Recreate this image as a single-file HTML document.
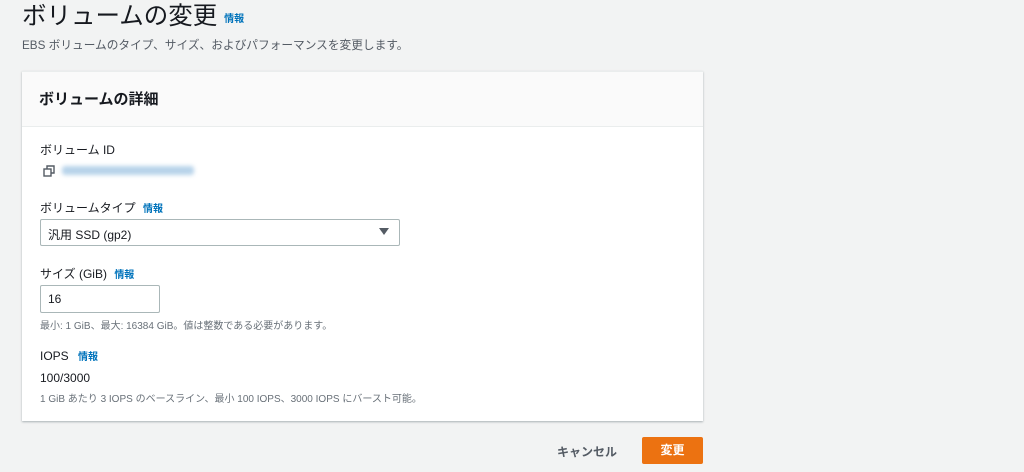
<!DOCTYPE html><html><head><meta charset="utf-8"><style>
*{margin:0;padding:0;box-sizing:border-box}
body{width:1024px;height:472px;background:#f2f3f3;font-family:"Liberation Sans","Noto Sans CJK JP",sans-serif;color:#16191f;position:relative;overflow:hidden}
.a{position:absolute;white-space:nowrap}
.info{color:#0073bb;font-weight:bold;font-size:10px}
.lbl{font-size:12px;color:#16191f}
.hint{font-size:10px;color:#687078}
</style></head><body>
<div class="a" style="left:22px;top:-3px;font-size:24.5px;color:#16191f">ボリュームの変更 <span class="info" style="font-size:10px;vertical-align:middle">情報</span></div>
<div class="a" style="left:22px;top:36px;font-size:11.7px;color:#545b64">EBS ボリュームのタイプ、サイズ、およびパフォーマンスを変更します。</div>
<div class="a" style="left:22px;top:71px;width:681px;height:350px;background:#fff;box-shadow:0 1px 2px rgba(0,28,36,.3);border-top:1px solid #eaeded">
<div style="height:55px;background:#fafafa;border-bottom:1px solid #eaeded;position:relative"><div class="a" style="left:17px;top:16px;font-size:15px;font-weight:bold">ボリュームの詳細</div></div>
</div>
<div class="a lbl" style="left:40px;top:141px">ボリューム ID</div>
<svg class="a" style="left:43px;top:165px" width="12" height="12" viewBox="0 0 12 12" fill="none" stroke="#545b64" stroke-width="1.4"><rect x="1" y="4" width="7" height="7"/><path d="M4 4V1h7v7H8"/></svg>
<div class="a" style="left:62px;top:166px;width:132px;height:9px;background:#b7d3ea;filter:blur(2px);border-radius:3px"></div>
<div class="a lbl" style="left:40px;top:199px">ボリュームタイプ <span class="info" style="margin-left:4px">情報</span></div>
<div class="a" style="left:40px;top:219px;width:360px;height:27px;background:#fff;border:1px solid #aab7b8;border-radius:2px"><span class="a lbl" style="left:7px;top:6px">汎用 SSD (gp2)</span><span class="a" style="right:10px;top:8px;width:0;height:0;border-left:5px solid transparent;border-right:5px solid transparent;border-top:7px solid #545b64"></span></div>
<div class="a lbl" style="left:40px;top:265px">サイズ (GiB) <span class="info" style="margin-left:4px">情報</span></div>
<div class="a" style="left:40px;top:285px;width:120px;height:28px;background:#fff;border:1px solid #aab7b8;border-radius:2px"><span class="a lbl" style="left:7px;top:6px">16</span></div>
<div class="a hint" style="left:40px;top:317px">最小: 1 GiB、最大: 16384 GiB。値は整数である必要があります。</div>
<div class="a lbl" style="left:40px;top:348px">IOPS <span class="info" style="margin-left:6px">情報</span></div>
<div class="a lbl" style="left:40px;top:371px">100/3000</div>
<div class="a hint" style="left:40px;top:390px">1 GiB あたり 3 IOPS のベースライン、最小 100 IOPS、3000 IOPS にバースト可能。</div>
<div class="a" style="left:557px;top:443px;font-size:12px;font-weight:bold;color:#545b64">キャンセル</div>
<div class="a" style="left:642px;top:437px;width:61px;height:27px;background:#ec7211;color:#fff;font-size:12px;font-weight:bold;text-align:center;line-height:27px;border-radius:2px">変更</div>
</body></html>
